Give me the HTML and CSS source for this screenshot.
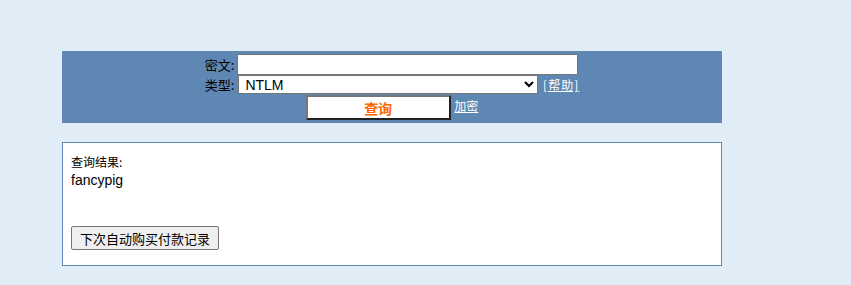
FILE: index.html
```html
<!DOCTYPE html>
<html lang="zh-CN">
<head>
    <meta charset="UTF-8">
    <title>查询</title>
    <link rel="stylesheet" href="styles.css">
</head>
<body>
    <div class="wrap">
        <form class="panel">
            <table class="form-table">
                <tr>
                    <td class="label">密文:</td>
                    <td><input type="text" class="cipher"></td>
                </tr>
                <tr>
                    <td class="label">类型:</td>
                    <td>
                        <select class="type">
                            <option>NTLM</option>
                        </select>
                        <a href="#" class="link help">[帮助]</a>
                    </td>
                </tr>
                <tr>
                    <td colspan="2" class="actions">
                        <button type="button" class="btn-query">查询</button>
                        <a href="#" class="link">加密</a>
                    </td>
                </tr>
            </table>
        </form>

        <div class="result">
            <div class="result-title">查询结果:</div>
            <div class="result-value">fancypig</div>
            <button type="button" class="btn-record">下次自动购买付款记录</button>
        </div>
    </div>
</body>
</html>
```

FILE: styles.css
```css
body {
    margin: 0;
    background-color: #e1edf6;
    font-family: "Noto Sans CJK SC", "Liberation Sans", sans-serif;
    font-size: 12px;
    color: #000;
}

.wrap {
    width: 660px;
    margin: 51px 0 0 62px;
}

.panel {
    background-color: #5e88b3;
    padding: 2px 0 3px;
    height: 67px;
}

.form-table {
    margin: 0 auto;
    border-collapse: collapse;
}

.form-table td {
    padding: 0;
    vertical-align: middle;
}

.label {
    text-align: right;
    font-size: 13px;
    padding-right: 3px !important;
    line-height: 19px;
}

.cipher {
    width: 335px;
    height: 17px;
    margin: 1px 0 0;
    padding: 1px 2px;
    border: 1px solid #767676;
    background: #fff;
    font-size: 13px;
}

.type {
    width: 300px;
    height: 19px;
    margin: 0 0 0 1px;
    border: 1px solid #767676;
    border-radius: 0;
    background: #fff;
    font-family: "Liberation Sans", sans-serif;
    font-size: 14px;
    padding: 0 0 0 2px;
}

.link {
    color: #fff;
    font-size: 12px;
    margin-left: 1px;
}

.help {
    margin-left: 2px;
    letter-spacing: 1px;
}

.actions {
    text-align: center;
    padding-top: 1px !important;
}

.btn-query {
    width: 145px;
    height: 25px;
    background: #fff;
    color: #f60;
    font-family: "Noto Sans CJK SC", sans-serif;
    font-weight: bold;
    font-size: 14px;
    border-top: 2px solid #767676;
    border-left: 2px solid #767676;
    border-right: 2px solid #222;
    border-bottom: 2px solid #222;
    padding: 0;
    vertical-align: middle;
}

.result {
    margin-top: 19px;
    background: #fff;
    border: 1px solid #5e88b3;
    height: 112px;
    padding: 10px 8px 0;
}

.result-title {
    line-height: 18px;
}

.result-value {
    font-family: "Liberation Sans", sans-serif;
    font-size: 14px;
    line-height: 18px;
}

.btn-record {
    display: block;
    margin-top: 37px;
    height: 24px;
    padding: 0 8px;
    font-family: "Noto Sans CJK SC", sans-serif;
    font-size: 13px;
    background: #efefef;
    border: 1px solid #767676;
    border-radius: 2px;
}
```
